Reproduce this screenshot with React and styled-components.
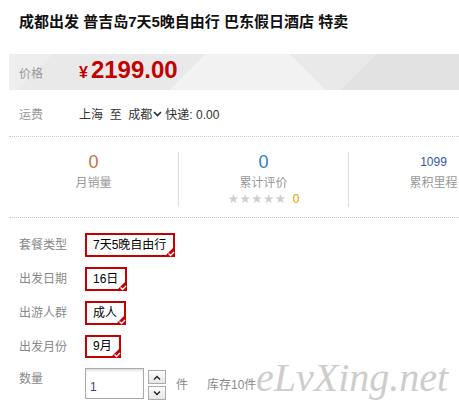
import React from "react";
import styled, { createGlobalStyle } from "styled-components";

const GlobalStyle = createGlobalStyle`
  html, body {
    margin: 0;
    padding: 0;
    background: #fff;
    overflow: hidden;
  }
  body {
    font-family: "Liberation Sans", "Noto Sans CJK SC", sans-serif;
    font-size: 12px;
    color: #333;
  }
`;

const Panel = styled.div`
  position: relative;
  width: 510px;
  padding: 12px 0 0 9px;
`;

const Title = styled.h1`
  margin: 0 0 22px 10px;
  height: 20px;
  line-height: 20px;
  font-size: 15px;
  font-weight: bold;
  color: #111;
  white-space: nowrap;
`;

const PriceBar = styled.div`
  display: flex;
  align-items: center;
  height: 36px;
  padding-left: 10px;
  background-color: #e9e9e9;
  background-image:
    linear-gradient(135deg, #eeeeee 0 31px, transparent 31px),
    linear-gradient(135deg, transparent 260px, #e2e2e2 260px),
    linear-gradient(45deg, transparent 224px, #e9e9e9 224px),
    linear-gradient(135deg, #e9e9e9 139px, #f2f2f2 139px);
`;

const Label = styled.span`
  width: 60px;
  flex: none;
  color: #999;
  font-size: 12px;
`;

const Price = styled.div`
  display: flex;
  align-items: baseline;
  color: #c40000;
  margin-top: -4px;
`;

const Yen = styled.span`
  font-size: 16px;
  font-weight: bold;
  margin-right: 3px;
`;

const Amount = styled.span`
  font-size: 24px;
  font-weight: bold;
`;

const ShipRow = styled.div`
  display: flex;
  align-items: center;
  height: 46px;
  padding-left: 10px;
  border-bottom: 1px dotted #c8c8c8;
`;

const ShipText = styled.span`
  display: flex;
  align-items: center;
  color: #333;
  font-size: 12px;
  white-space: pre;
`;

const Caret = styled.svg`
  margin: 1px 3px 0 1px;
`;

const Stats = styled.div`
  display: flex;
  padding: 15px 0 10px;
  border-bottom: 1px dotted #c8c8c8;
`;

const Stat = styled.div`
  width: 169px;
  height: 55px;
  border-left: ${(p) => (p.$first ? "none" : "1px solid #e2ddd8")};
  display: flex;
  flex-direction: column;
  align-items: center;
`;

const StatNum = styled.div`
  height: 20px;
  line-height: 20px;
  font-size: ${(p) => (p.$small ? "12px" : "18px")};
  color: ${(p) => p.$color};
  margin-bottom: 2px;
`;

const StatLabel = styled.div`
  height: 18px;
  line-height: 18px;
  font-size: 12px;
  color: #999;
`;

const StarLine = styled.div`
  display: flex;
  align-items: center;
  height: 14px;
  line-height: 14px;
`;

const Stars = styled.span`
  font-family: "DejaVu Sans", sans-serif;
  font-size: 12.5px;
  letter-spacing: 0.6px;
  color: #cfcfcf;
`;

const StarCount = styled.span`
  margin-left: 6px;
  font-size: 12px;
  color: #f39800;
`;

const Options = styled.div`
  display: flex;
  flex-direction: column;
  gap: 10px;
  padding-top: 15px;
`;

const OptRow = styled.div`
  display: flex;
  align-items: ${(p) => (p.$top ? "flex-start" : "center")};
  padding-left: 10px;
`;

const OptLabel = styled.span`
  width: 66px;
  flex: none;
  color: #888;
  font-size: 12px;
  line-height: 20px;
  margin-top: ${(p) => (p.$top ? "1px" : "0")};
`;

const Choice = styled.span`
  position: relative;
  box-sizing: border-box;
  height: ${(p) => p.$h || 24}px;
  line-height: ${(p) => (p.$h || 24) - 4}px;
  padding: 0 7px 0 6px;
  border: 2px solid #c40000;
  color: #000;
  font-size: 12px;
  white-space: nowrap;
`;

const Tick = styled.svg`
  position: absolute;
  right: -2px;
  bottom: -2px;
`;

const QtyBox = styled.input`
  box-sizing: border-box;
  width: 59px;
  height: 31px;
  margin: 0;
  padding: 6px 0 0 4px;
  border: 1px solid #aaa;
  box-shadow: inset 0 2px 2px #e4e4e4;
  font-family: "Liberation Sans", sans-serif;
  font-size: 12px;
  color: #4a3c6e;
  outline: none;
`;

const Stepper = styled.div`
  display: flex;
  flex-direction: column;
  gap: 2px;
  margin: 2px 0 0 4px;
`;

const StepBtn = styled.div`
  box-sizing: border-box;
  width: 18px;
  height: 14px;
  border: 1px solid #aaa;
  background: linear-gradient(#fdfdfd, #e6e6e6);
  display: flex;
  align-items: center;
  justify-content: center;
`;

const Unit = styled.span`
  margin: 7px 0 0 ${(p) => p.$gap}px;
  color: #888;
  font-size: 12px;
  line-height: 20px;
`;

const Watermark = styled.div`
  position: absolute;
  left: 256px;
  top: 358px;
  font-family: "Liberation Serif", serif;
  font-style: italic;
  font-size: 40px;
  line-height: 40px;
  letter-spacing: 0px;
  color: #cdcdcd;
  pointer-events: none;
`;

const choices = [
  { label: "套餐类型", value: "7天5晚自由行" },
  { label: "出发日期", value: "16日" },
  { label: "出游人群", value: "成人" },
  { label: "出发月份", value: "9月", h: 23 },
];

function Check() {
  return (
    <Tick width="11" height="11" viewBox="0 0 11 11">
      <polygon points="11,0 11,11 0,11" fill="#c40000" />
      <polyline points="4.5,7.5 6.5,9.5 10,6" fill="none" stroke="#fff" strokeWidth="1.3" />
    </Tick>
  );
}

function Arrow({ up }) {
  return (
    <svg width="8" height="5" viewBox="0 0 8 5">
      <polyline
        points={up ? "1,4.5 4,1.5 7,4.5" : "1,0.5 4,3.5 7,0.5"}
        fill="none"
        stroke="#222"
        strokeWidth="1.4"
      />
    </svg>
  );
}

export default function App() {
  return (
    <>
      <GlobalStyle />
      <Panel>
        <Title>成都出发 普吉岛7天5晚自由行 巴东假日酒店 特卖</Title>

        <PriceBar>
          <Label>价格</Label>
          <Price>
            <Yen>¥</Yen>
            <Amount>2199.00</Amount>
          </Price>
        </PriceBar>

        <ShipRow>
          <Label>运费</Label>
          <ShipText>
            上海  至  成都
            <Caret width="9" height="6" viewBox="0 0 9 6">
              <polyline points="1,1 4.5,4.5 8,1" fill="none" stroke="#1f2a44" strokeWidth="1.6" />
            </Caret>
            快递: 0.00
          </ShipText>
        </ShipRow>

        <Stats>
          <Stat $first>
            <StatNum $color="#c0763f">0</StatNum>
            <StatLabel>月销量</StatLabel>
          </Stat>
          <Stat>
            <StatNum $color="#2f7fc6">0</StatNum>
            <StatLabel>累计评价</StatLabel>
            <StarLine>
              <Stars>★★★★★</Stars>
              <StarCount>0</StarCount>
            </StarLine>
          </Stat>
          <Stat>
            <StatNum $small $color="#3553a8">1099</StatNum>
            <StatLabel>累积里程</StatLabel>
          </Stat>
        </Stats>

        <Options>
          {choices.map((c) => (
            <OptRow key={c.label}>
              <OptLabel>{c.label}</OptLabel>
              <Choice $h={c.h}>
                {c.value}
                <Check />
              </Choice>
            </OptRow>
          ))}
          <OptRow $top>
            <OptLabel $top>数量</OptLabel>
            <QtyBox value="1" readOnly />
            <Stepper>
              <StepBtn>
                <Arrow up />
              </StepBtn>
              <StepBtn>
                <Arrow />
              </StepBtn>
            </Stepper>
            <Unit $gap={10}>件</Unit>
            <Unit $gap={19}>库存10件</Unit>
          </OptRow>
        </Options>

        <Watermark>eLvXing.net</Watermark>
      </Panel>
    </>
  );
}
